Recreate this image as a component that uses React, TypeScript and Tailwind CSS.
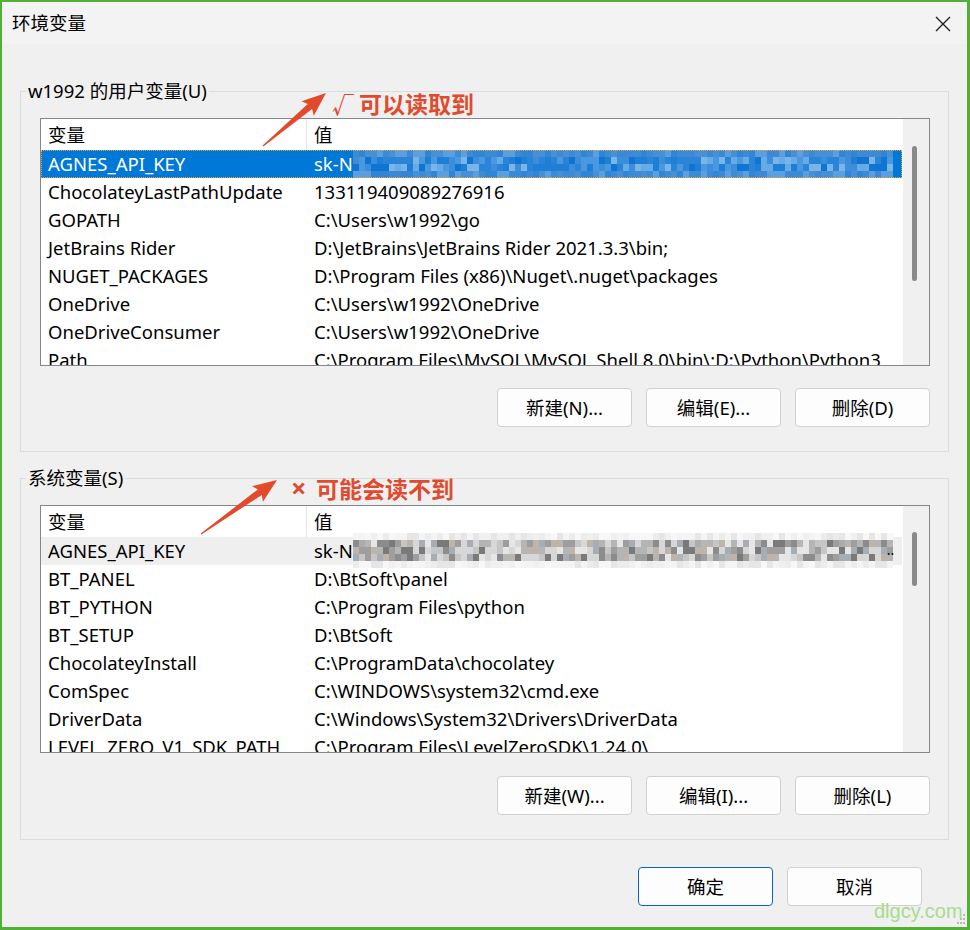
type Row = { name: string; value: string; secret?: boolean };

const userRows: Row[] = [
  { name: "AGNES_API_KEY", value: "sk-N", secret: true },
  { name: "ChocolateyLastPathUpdate", value: "133119409089276916" },
  { name: "GOPATH", value: "C:\\Users\\w1992\\go" },
  { name: "JetBrains Rider", value: "D:\\JetBrains\\JetBrains Rider 2021.3.3\\bin;" },
  { name: "NUGET_PACKAGES", value: "D:\\Program Files (x86)\\Nuget\\.nuget\\packages" },
  { name: "OneDrive", value: "C:\\Users\\w1992\\OneDrive" },
  { name: "OneDriveConsumer", value: "C:\\Users\\w1992\\OneDrive" },
  { name: "Path", value: "C:\\Program Files\\MySQL\\MySQL Shell 8.0\\bin\\;D:\\Python\\Python3" },
];

const systemRows: Row[] = [
  { name: "AGNES_API_KEY", value: "sk-N", secret: true },
  { name: "BT_PANEL", value: "D:\\BtSoft\\panel" },
  { name: "BT_PYTHON", value: "C:\\Program Files\\python" },
  { name: "BT_SETUP", value: "D:\\BtSoft" },
  { name: "ChocolateyInstall", value: "C:\\ProgramData\\chocolatey" },
  { name: "ComSpec", value: "C:\\WINDOWS\\system32\\cmd.exe" },
  { name: "DriverData", value: "C:\\Windows\\System32\\Drivers\\DriverData" },
  { name: "LEVEL_ZERO_V1_SDK_PATH", value: "C:\\Program Files\\LevelZeroSDK\\1.24.0\\" },
];

const blueEdge = ["#3b8bd6", "#4690d8", "#3a8ad8", "#5a9fe0", "#2f85d6"];
const blueInk = ["#1f7ed6", "#4a98df", "#66aae6", "#0f74d2", "#3c8edb", "#7ab5e8", "#2a84d8"];
const grayEdge = ["#f4f4f4", "#f0f0f0", "#f7f7f7", "#ececec", "#e6e6e6"];
const grayInk = ["#9e9e9e", "#b5b5b5", "#8c8c8c", "#c6c6c6", "#a7adb5", "#d7d7d7", "#7a7a7a", "#bdb4ac", "#e6e6e6"];

function seeded(seed: number) {
  let s = seed;
  return () => {
    s = (s * 16807) % 2147483647;
    return (s - 1) / 2147483646;
  };
}

// pixelated block that hides the key value
function Mosaic({ seed, rows, edge, ink }: { seed: number; rows: number; edge: string[]; ink: string[] }) {
  const next = seeded(seed);
  const cells: string[] = [];
  for (let r = 0; r < rows; r++) {
    for (let c = 0; c < 90; c++) {
      const pal = r === 0 || r === rows - 1 ? edge : ink;
      cells.push(pal[Math.floor(next() * pal.length)]);
    }
  }
  return (
    <div className="flex w-[540px] shrink-0 flex-wrap">
      {cells.map((c, i) => (
        <span key={i} className="h-[7px] w-[6px]" style={{ backgroundColor: c }} />
      ))}
    </div>
  );
}

function VarList({ rows, focused, thumbTop, thumbHeight }: { rows: Row[]; focused: boolean; thumbTop: number; thumbHeight: number }) {
  return (
    <div className="flex h-[248px] border border-[#82878f] bg-white">
      <div className="min-w-0 flex-1 overflow-hidden">
        <div className="flex h-[31px]">
          <div className="flex w-[266px] items-center border-r border-[#e5e5e5] pl-[7px]">变量</div>
          <div className="flex items-center pl-[7px]">值</div>
        </div>
        {rows.map((row) => {
          const rowCls = row.secret
            ? focused
              ? "bg-[#0078d7] text-white outline-1 outline-dotted outline-[#e8a040] -outline-offset-1"
              : "bg-[#efefef]"
            : "";
          return (
            <div key={row.name} className={`flex h-[28px] items-center whitespace-nowrap ${rowCls}`}>
              <div className="w-[266px] shrink-0 pl-[7px]">{row.name}</div>
              <div className="flex h-full items-center pl-[7px]">
                <span>{row.value}</span>
                {row.secret && focused && <Mosaic seed={7} rows={4} edge={blueEdge} ink={blueInk} />}
                {row.secret && !focused && (
                  <div className="-mt-[2px] flex items-center">
                    <Mosaic seed={31} rows={5} edge={grayEdge} ink={grayInk} />
                    <span className="-ml-[6px] text-[14px] leading-none">..</span>
                  </div>
                )}
              </div>
            </div>
          );
        })}
      </div>
      <div className="w-[27px] shrink-0 border-l border-white bg-[#f0f0f0] pl-[9px]">
        <div className="w-[5px] rounded-full bg-[#8a8a8a]" style={{ marginTop: thumbTop, height: thumbHeight }} />
      </div>
    </div>
  );
}

function Btn({ label, primary }: { label: string; primary?: boolean }) {
  return (
    <button
      className={`flex h-[39px] w-[135px] items-center justify-center rounded-[4px] border bg-[#fdfdfd] ${
        primary ? "border-[#0a64c8]" : "border-[#d0d0d0]"
      }`}
    >
      {label}
    </button>
  );
}

function Group({ title, children }: { title: string; children: React.ReactNode }) {
  return (
    <fieldset className="mx-[18px] border border-[#dcdcdc]">
      <legend className="ml-[5px] px-[2px] leading-[24px]">{title}</legend>
      <div className="pt-[15px] pr-[18px] pb-[24px] pl-[19px]">{children}</div>
    </fieldset>
  );
}

function arrowPoints(x1: number, y1: number, x2: number, y2: number) {
  const dx = x2 - x1;
  const dy = y2 - y1;
  const len = Math.hypot(dx, dy);
  const ux = dx / len;
  const uy = dy / len;
  const nx = -uy;
  const ny = ux;
  const head = 24;
  const bx = x2 - ux * head;
  const by = y2 - uy * head;
  const pt = (x: number, y: number, w: number) => `${x + nx * w},${y + ny * w}`;
  return [
    pt(x1, y1, 0.6),
    pt(bx + ux * 3, by + uy * 3, 3.4),
    pt(bx, by, 9.5),
    `${x2},${y2}`,
    pt(bx, by, -9.5),
    pt(bx + ux * 3, by + uy * 3, -3.4),
    pt(x1, y1, -0.6),
  ].join(" ");
}

export default function App() {
  return (
    <div className="relative h-[930px] w-[970px] font-['Noto_Sans','Noto_Sans_CJK_SC',sans-serif] text-[18.5px] text-black">
      <div className="flex h-full flex-col border-2 border-r-[3px] border-b-[3px] border-[#52b135] bg-[#f0f0f0]">
        <div className="flex h-[42px] shrink-0 items-center justify-between bg-[#f3f3f3] pr-[16px] pl-[10px]">
          <span>环境变量</span>
          <svg width="16" height="16" viewBox="0 0 16 16" className="mt-[2px]">
            <path d="M1 1 L15 15 M15 1 L1 15" stroke="#1a1a1a" strokeWidth="1.3" />
          </svg>
        </div>

        <div className="pt-[35px]">
          <Group title="w1992 的用户变量(U)">
            <VarList rows={userRows} focused thumbTop={27} thumbHeight={135} />
            <div className="mt-[22px] flex justify-end gap-[14px]">
              <Btn label="新建(N)..." />
              <Btn label="编辑(E)..." />
              <Btn label="删除(D)" />
            </div>
          </Group>
        </div>

        <div className="pt-[14px]">
          <Group title="系统变量(S)">
            <VarList rows={systemRows} focused={false} thumbTop={26} thumbHeight={54} />
            <div className="mt-[23px] flex justify-end gap-[14px]">
              <Btn label="新建(W)..." />
              <Btn label="编辑(I)..." />
              <Btn label="删除(L)" />
            </div>
          </Group>
        </div>

        <div className="mt-[27px] flex justify-end gap-[14px] pr-[45px]">
          <Btn label="确定" primary />
          <Btn label="取消" />
        </div>
      </div>

      {/* annotation arrows */}
      <svg className="pointer-events-none absolute top-0 left-0" width="970" height="930">
        <polygon points={arrowPoints(263, 146, 326, 93)} fill="#e34a2c" />
        <polygon points={arrowPoints(201, 534, 277, 480)} fill="#e34a2c" />
      </svg>
      <span className="absolute top-[89px] left-[332px] text-[22px] leading-[30px] font-bold text-[#e04b2f]">√</span>
      <span className="absolute top-[89px] left-[359px] text-[23px] leading-[30px] font-bold text-[#e04b2f]">可以读取到</span>
      <span className="absolute top-[473px] left-[291px] text-[27px] leading-[30px] font-bold text-[#e04b2f]">×</span>
      <span className="absolute top-[474px] left-[316px] text-[23px] leading-[30px] font-bold text-[#e04b2f]">可能会读不到</span>

      <span className="absolute top-[898px] left-[874px] font-['Liberation_Sans',sans-serif] text-[20px] leading-[26px] text-[#a9dc8f]">
        dlgcy.com
      </span>
      <svg className="absolute top-[914px] left-[957px]" width="10" height="12">
        <rect x="6" y="0" width="2" height="2" fill="#b8b8b8" />
        <rect x="3" y="4" width="2" height="2" fill="#b8b8b8" />
        <rect x="6" y="4" width="2" height="2" fill="#b8b8b8" />
        <rect x="0" y="8" width="2" height="2" fill="#b8b8b8" />
        <rect x="3" y="8" width="2" height="2" fill="#b8b8b8" />
        <rect x="6" y="8" width="2" height="2" fill="#b8b8b8" />
      </svg>
    </div>
  );
}
